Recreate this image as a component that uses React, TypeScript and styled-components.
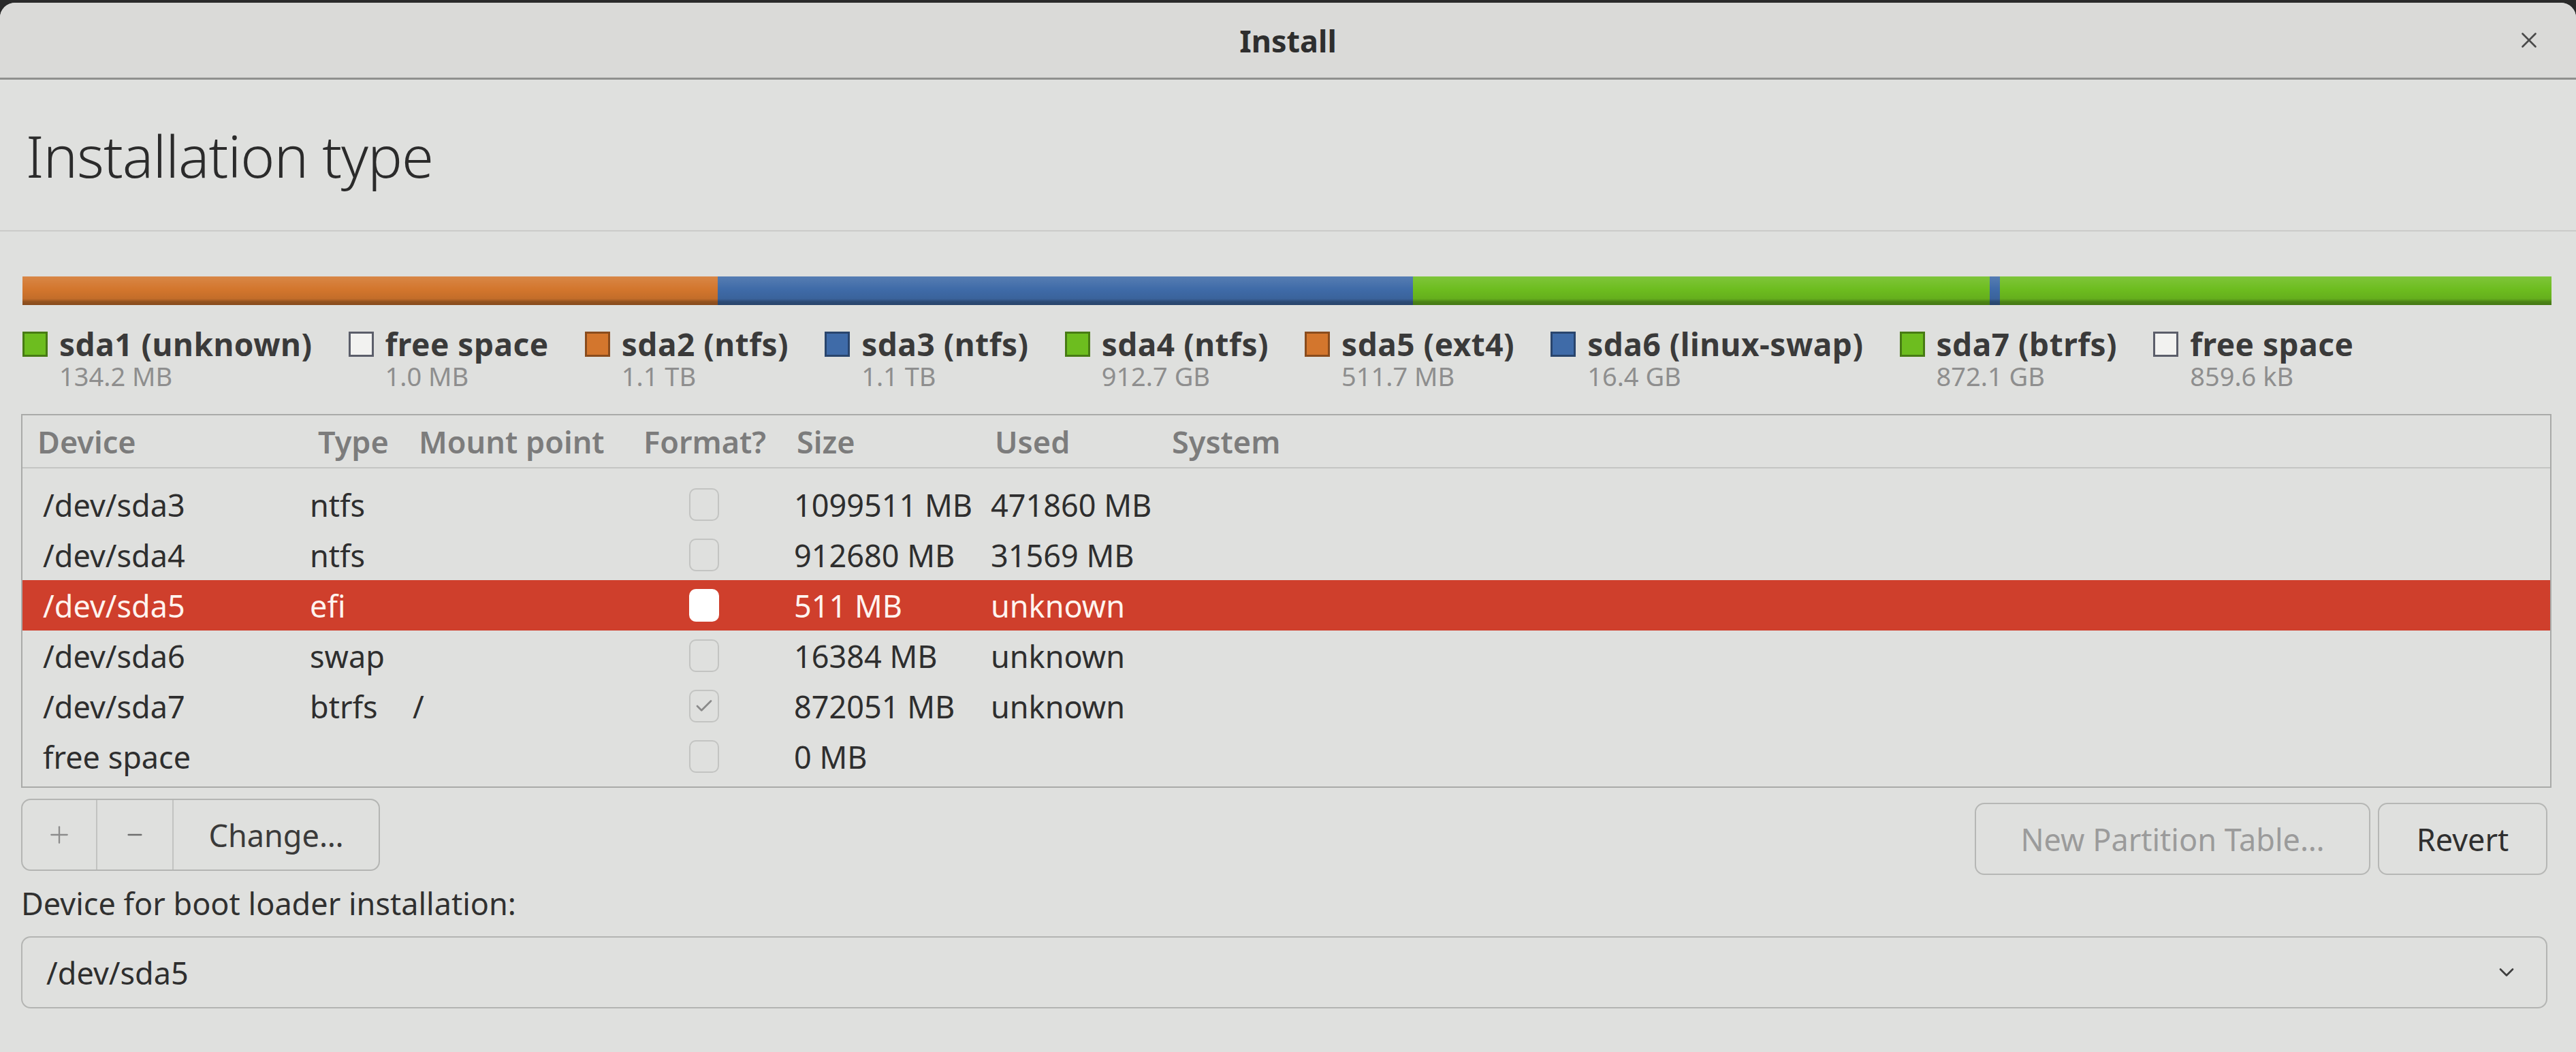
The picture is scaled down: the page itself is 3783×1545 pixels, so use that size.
import React from "react";
import styled, { createGlobalStyle } from "styled-components";
import { Check, ChevronDown, Minus, Plus, X } from "lucide-react";

const colors = {
  bg: "#dfe0de",
  titlebar: "#dadad8",
  text: "#333333",
  muted: "#8e8e8e",
  header: "#7c7c7c",
  border: "#a9aaa8",
  orange: "#d3762d",
  blue: "#3f6ba8",
  green: "#6dbd1f",
  free: "#f2f2f0",
  selected: "#cf3f2c",
};

type Part = { name: string; size: number; color: string; label: string; human: string };

const parts: Part[] = [
  { name: "sda1", size: 134.2, color: colors.green, label: "sda1 (unknown)", human: "134.2 MB" },
  { name: "free1", size: 1, color: colors.free, label: "free space", human: "1.0 MB" },
  { name: "sda2", size: 1099511, color: colors.orange, label: "sda2 (ntfs)", human: "1.1 TB" },
  { name: "sda3", size: 1099511, color: colors.blue, label: "sda3 (ntfs)", human: "1.1 TB" },
  { name: "sda4", size: 912680, color: colors.green, label: "sda4 (ntfs)", human: "912.7 GB" },
  { name: "sda5", size: 511.7, color: colors.orange, label: "sda5 (ext4)", human: "511.7 MB" },
  { name: "sda6", size: 16384, color: colors.blue, label: "sda6 (linux-swap)", human: "16.4 GB" },
  { name: "sda7", size: 872051, color: colors.green, label: "sda7 (btrfs)", human: "872.1 GB" },
  { name: "free2", size: 0.86, color: colors.free, label: "free space", human: "859.6 kB" },
];

type Col = { title: string; width: string; headPad: number; cellPad: number };

const columns: Col[] = [
  { title: "Device", width: "407px", headPad: 22, cellPad: 30 },
  { title: "Type", width: "160px", headPad: 27, cellPad: 15 },
  { title: "Mount point", width: "332px", headPad: 15, cellPad: 6 },
  { title: "Format?", width: "226px", headPad: 13, cellPad: 80 },
  { title: "Size", width: "289px", headPad: 12, cellPad: 8 },
  { title: "Used", width: "263px", headPad: 14, cellPad: 8 },
  { title: "System", width: "1fr", headPad: 11, cellPad: 8 },
];

const gridCols = columns.map((c) => c.width).join(" ");

type Row = {
  device: string;
  type: string;
  mount: string;
  format: boolean;
  size: string;
  used: string;
  selected?: boolean;
};

const rows: Row[] = [
  { device: "/dev/sda3", type: "ntfs", mount: "", format: false, size: "1099511 MB", used: "471860 MB" },
  { device: "/dev/sda4", type: "ntfs", mount: "", format: false, size: "912680 MB", used: "31569 MB" },
  { device: "/dev/sda5", type: "efi", mount: "", format: false, size: "511 MB", used: "unknown", selected: true },
  { device: "/dev/sda6", type: "swap", mount: "", format: false, size: "16384 MB", used: "unknown" },
  { device: "/dev/sda7", type: "btrfs", mount: "/", format: true, size: "872051 MB", used: "unknown" },
  { device: "free space", type: "", mount: "", format: false, size: "0 MB", used: "" },
];

const GlobalStyle = createGlobalStyle`
  html, body, #root {
    margin: 0;
    height: 100%;
  }
  body {
    background: #2a2a2a;
    font-family: "Noto Sans", "Open Sans", "DejaVu Sans", sans-serif;
    color: ${colors.text};
    overflow: hidden;
  }
  * {
    box-sizing: border-box;
  }
`;

const Window = styled.div`
  margin-top: 4px;
  height: calc(100% - 4px);
  background: ${colors.bg};
  border-radius: 22px 22px 0 0;
  display: flex;
  flex-direction: column;
  overflow: hidden;
`;

const TitleBar = styled.header`
  height: 113px;
  flex-shrink: 0;
  background: ${colors.titlebar};
  border-bottom: 3px solid #8f908e;
  display: flex;
  align-items: center;
  justify-content: center;
  position: relative;
`;

const Title = styled.h1`
  margin: 0;
  font-size: 45px;
  font-weight: 700;
  color: #2e2e2e;
`;

const CloseButton = styled.button`
  position: absolute;
  right: 50px;
  top: 50%;
  transform: translateY(-50%);
  border: 0;
  background: none;
  padding: 0;
  display: flex;
  color: #4a4a4a;
`;

const Content = styled.main`
  flex: 1;
  min-width: 0;
  display: flex;
  flex-direction: column;
  padding: 0 36px 0 31px;
`;

const PageHeader = styled.div`
  height: 223px;
  display: flex;
  align-items: center;
  border-bottom: 2px solid #cbcbc9;
  margin: 0 -36px 0 -31px;
  padding-left: 38px;
`;

const Heading = styled.h2`
  margin: 0;
  font-size: 85px;
  font-weight: 300;
  letter-spacing: -1px;
  color: #2b2b2b;
`;

const Bar = styled.div`
  margin-top: 66px;
  height: 42px;
  display: flex;
  overflow: hidden;
  margin-left: 2px;
`;

const Segment = styled.div<{ $color: string; $grow: number }>`
  flex: ${(p) => p.$grow} 1 0;
  min-width: 0;
  background-color: ${(p) => p.$color};
  background-image: linear-gradient(
    to bottom,
    rgba(255, 255, 255, 0.12) 0%,
    rgba(255, 255, 255, 0) 45%,
    rgba(0, 0, 0, 0.08) 78%,
    rgba(0, 0, 0, 0.3) 88%,
    rgba(0, 0, 0, 0.36) 100%
  );
`;

const Legend = styled.div`
  margin-top: 32px;
  display: flex;
  gap: 53px;
  padding-left: 2px;
`;

const LegendItem = styled.div`
  display: grid;
  grid-template-columns: 37px auto;
  column-gap: 17px;
  align-items: center;
`;

const Swatch = styled.span<{ $color: string; $free: boolean }>`
  width: 37px;
  height: 37px;
  background: ${(p) => p.$color};
  border: 3px solid ${(p) => (p.$free ? "#5b5e6a" : "rgba(0,0,0,0.35)")};
`;

const LegendLabel = styled.span`
  font-size: 46px;
  font-weight: 700;
  letter-spacing: 0.5px;
  line-height: 50px;
  color: #3a3a3a;
  white-space: nowrap;
`;

const LegendSize = styled.span`
  grid-column: 2;
  font-size: 38px;
  line-height: 44px;
  color: ${colors.muted};
  white-space: nowrap;
`;

const Table = styled.div`
  margin-top: 34px;
  height: 549px;
  border: 2px solid ${colors.border};
  display: flex;
  flex-direction: column;
  overflow: hidden;
`;

const HeaderRow = styled.div`
  display: grid;
  grid-template-columns: ${gridCols};
  height: 78px;
  flex-shrink: 0;
  align-items: center;
  border-bottom: 2px solid #c4c5c3;
`;

const HeaderCell = styled.div<{ $pad: number }>`
  padding-left: ${(p) => p.$pad}px;
  font-size: 45px;
  font-weight: 600;
  color: ${colors.header};
  white-space: nowrap;
`;

const Viewport = styled.div`
  flex: 1;
  overflow: hidden;
  padding-top: 16px;
`;

const ListRow = styled.div<{ $selected: boolean }>`
  display: grid;
  grid-template-columns: ${gridCols};
  height: 74px;
  align-items: center;
  background: ${(p) => (p.$selected ? colors.selected : "transparent")};
  color: ${(p) => (p.$selected ? "#fff4ef" : "#2e2e2e")};
`;

const Cell = styled.div<{ $pad: number }>`
  padding-left: ${(p) => p.$pad}px;
  font-size: 45px;
  white-space: nowrap;
  display: flex;
  align-items: center;
`;

const CheckBox = styled.span<{ $selected: boolean }>`
  width: 44px;
  height: 48px;
  border-radius: 10px;
  border: 2px solid ${(p) => (p.$selected ? "#ffffff" : "#c3c4c2")};
  background: ${(p) => (p.$selected ? "#ffffff" : "transparent")};
  display: flex;
  align-items: center;
  justify-content: center;
  color: #8a8a8a;
`;

const ButtonRow = styled.div`
  margin-top: 10px;
  display: flex;
  justify-content: space-between;
  align-items: center;
  padding-right: 6px;
`;

const ButtonGroup = styled.div`
  display: flex;
  flex-shrink: 0;
  height: 106px;
  border: 2px solid #b4b5b3;
  border-radius: 14px;
  overflow: hidden;
`;

const GroupButton = styled.button<{ $width: number }>`
  width: ${(p) => p.$width}px;
  flex-shrink: 0;
  border: 0;
  border-left: 2px solid #c2c3c1;
  background: transparent;
  font-family: inherit;
  font-size: 45px;
  color: #3a3a3a;
  display: flex;
  align-items: center;
  justify-content: center;
  padding: 0;

  &:first-child {
    border-left: 0;
  }
`;

const RightButtons = styled.div`
  display: flex;
  gap: 11px;
  margin-top: 12px;
`;

const Button = styled.button<{ $width: number; $disabled?: boolean }>`
  width: ${(p) => p.$width}px;
  flex-shrink: 0;
  height: 106px;
  border: 2px solid #b6b7b5;
  border-radius: 14px;
  background: transparent;
  font-family: inherit;
  font-size: 45px;
  color: ${(p) => (p.$disabled ? "#9b9b9b" : "#2f2f2f")};
  padding: 0;
`;

const FieldLabel = styled.div`
  margin-top: 12px;
  font-size: 45px;
  line-height: 60px;
  color: #303030;
`;

const Combo = styled.div`
  margin-top: 18px;
  height: 106px;
  border: 2px solid #b4b5b3;
  border-radius: 14px;
  display: flex;
  align-items: center;
  justify-content: space-between;
  padding: 0 40px 0 35px;
  font-size: 45px;
  color: #2e2e2e;
  margin-right: 6px;
`;

const total = parts.reduce((s, p) => s + p.size, 0);

export default function App() {
  return (
    <>
      <GlobalStyle />
      <Window>
        <TitleBar>
          <Title>Install</Title>
          <CloseButton>
            <X size={38} strokeWidth={1.7} />
          </CloseButton>
        </TitleBar>
        <Content>
          <PageHeader>
            <Heading>Installation type</Heading>
          </PageHeader>

          <Bar>
            {parts.map((p) => (
              <Segment key={p.name} $color={p.color} $grow={(p.size / total) * 1000} />
            ))}
          </Bar>

          <Legend>
            {parts.map((p) => (
              <LegendItem key={p.name}>
                <Swatch $color={p.color} $free={p.color === colors.free} />
                <LegendLabel>{p.label}</LegendLabel>
                <LegendSize>{p.human}</LegendSize>
              </LegendItem>
            ))}
          </Legend>

          <Table>
            <HeaderRow>
              {columns.map((c) => (
                <HeaderCell key={c.title} $pad={c.headPad}>
                  {c.title}
                </HeaderCell>
              ))}
            </HeaderRow>
            <Viewport>
              {rows.map((r) => {
                const sel = !!r.selected;
                return (
                  <ListRow key={r.device} $selected={sel}>
                    <Cell $pad={columns[0].cellPad}>{r.device}</Cell>
                    <Cell $pad={columns[1].cellPad}>{r.type}</Cell>
                    <Cell $pad={columns[2].cellPad}>{r.mount}</Cell>
                    <Cell $pad={columns[3].cellPad}>
                      <CheckBox $selected={sel}>
                        {r.format && <Check size={30} strokeWidth={2.2} />}
                      </CheckBox>
                    </Cell>
                    <Cell $pad={columns[4].cellPad}>{r.size}</Cell>
                    <Cell $pad={columns[5].cellPad}>{r.used}</Cell>
                    <Cell $pad={columns[6].cellPad} />
                  </ListRow>
                );
              })}
            </Viewport>
          </Table>

          <ButtonRow>
            <ButtonGroup>
              <GroupButton $width={108}>
                <Plus size={40} strokeWidth={1.4} color="#8c8c8c" />
              </GroupButton>
              <GroupButton $width={112}>
                <Minus size={32} strokeWidth={1.8} color="#6e6e6e" />
              </GroupButton>
              <GroupButton $width={303}>Change…</GroupButton>
            </ButtonGroup>
            <RightButtons>
              <Button $width={581} $disabled>
                New Partition Table…
              </Button>
              <Button $width={249}>Revert</Button>
            </RightButtons>
          </ButtonRow>

          <FieldLabel>Device for boot loader installation:</FieldLabel>
          <Combo>
            <span>/dev/sda5</span>
            <ChevronDown size={36} strokeWidth={1.8} color="#3e3e3e" />
          </Combo>
        </Content>
      </Window>
    </>
  );
}
